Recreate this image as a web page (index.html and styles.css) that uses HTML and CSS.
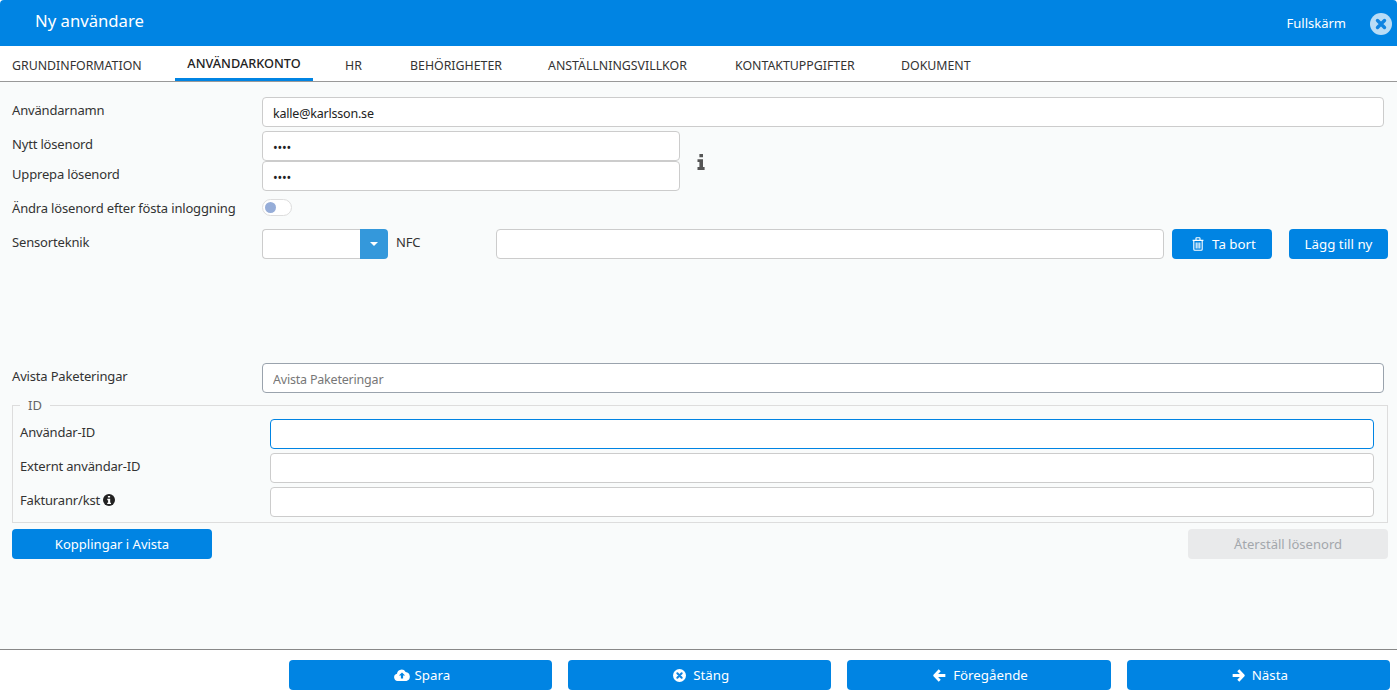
FILE: index.html
```html
<!DOCTYPE html>
<html lang="sv">
<head>
  <meta charset="UTF-8">
  <title>Ny användare</title>
  <link rel="stylesheet" href="styles.css">
</head>
<body>
  <div class="window">
    <div class="titlebar">
      <span class="title">Ny användare</span>
      <span class="fullscreen">Fullskärm</span>
      <svg class="close-icon" viewBox="0 0 22 22">
        <circle cx="11" cy="11" r="11" fill="#b9dcf6"/>
        <path d="M7.5 7.5l7 7M14.5 7.5l-7 7" stroke="#0f84e2" stroke-width="3.4" stroke-linecap="round"/>
      </svg>
    </div>

    <div class="tabs">
      <div class="tab tab1">GRUNDINFORMATION</div>
      <div class="tab tab2 active">ANVÄNDARKONTO</div>
      <div class="tab tab3">HR</div>
      <div class="tab tab4">BEHÖRIGHETER</div>
      <div class="tab tab5">ANSTÄLLNINGSVILLKOR</div>
      <div class="tab tab6">KONTAKTUPPGIFTER</div>
      <div class="tab tab7">DOKUMENT</div>
    </div>

    <div class="form">
      <div class="row">
        <label class="label">Användarnamn</label>
        <input class="input grow" type="text" value="kalle@karlsson.se">
      </div>

      <div class="password-group">
        <div class="password-rows">
          <div class="row no-gap">
            <label class="label">Nytt lösenord</label>
            <input class="input pw" type="password" value="1234">
          </div>
          <div class="row no-gap">
            <label class="label">Upprepa lösenord</label>
            <input class="input pw" type="password" value="1234">
          </div>
        </div>
        <svg class="pw-info" viewBox="0 0 8 16">
          <path d="M2.4 0h3.6v3.2H2.4zM.5 5.2H6v7.9h1.6V16H.5v-2.9h1.9V8H.5z" fill="#555"/>
        </svg>
      </div>

      <div class="row toggle-row">
        <label class="label">Ändra lösenord efter fösta inloggning</label>
        <div class="toggle"><div class="knob"></div></div>
      </div>

      <div class="row sensor-row">
        <label class="label">Sensorteknik</label>
        <div class="select">
          <div class="select-value"></div>
          <div class="select-arrow"><div class="caret"></div></div>
        </div>
        <span class="nfc">NFC</span>
        <input class="input nfc-input" type="text">
        <button class="btn remove">
          <svg class="icon trash" viewBox="0 0 12 14">
            <path d="M.6 3.4h10.800M4 3.200V1.400c0-.4.2-.6.6-.6h2.800c.4 0 .6.2.6.6v1.800M1.800 3.600v8.600c0 .6.4 1 1 1h6.400c.6 0 1-.4 1-1V3.600M4.200 5.400v6M6 5.400v6M7.800 5.400v6" fill="none" stroke="#fff" stroke-width="1.100"/>
          </svg>
          Ta bort
        </button>
        <button class="btn add">Lägg till ny</button>
      </div>

      <div class="row avista-row">
        <label class="label">Avista Paketeringar</label>
        <input class="input grow required" type="text" placeholder="Avista Paketeringar">
      </div>

      <fieldset class="id-box">
        <legend>ID</legend>
        <div class="row">
          <label class="label id-label">Användar-ID</label>
          <input class="input grow focused" type="text">
        </div>
        <div class="row">
          <label class="label id-label">Externt användar-ID</label>
          <input class="input grow" type="text">
        </div>
        <div class="row">
          <label class="label id-label">Fakturanr/kst
            <svg class="small-info" viewBox="0 0 12 12">
              <circle cx="6" cy="6" r="6" fill="#222"/>
              <path d="M4.9 1.9h2.200v1.700H4.900zM4.300 4.800h2.900v3.900h.8v1.400H4.200V8.700h.9V6.200h-.8z" fill="#fff"/>
            </svg>
          </label>
          <input class="input grow" type="text">
        </div>
      </fieldset>

      <div class="actions">
        <button class="btn wide">Kopplingar i Avista</button>
        <button class="btn wide disabled">Återställ lösenord</button>
      </div>
    </div>

    <div class="footer">
      <button class="btn foot save">
        <svg class="icon cloud" viewBox="0 0 16 12">
          <path d="M4 12a3.700 3.700 0 0 1-1-7.300A4.600 4.600 0 0 1 11.600 3 4.600 4.600 0 0 1 12.500 12zM8 3.400L4.900 6.600h2v3h2.200v-3h2z" fill="#fff" fill-rule="evenodd"/>
        </svg>
        Spara
      </button>
      <button class="btn foot">
        <svg class="icon" viewBox="0 0 12 12">
          <circle cx="6" cy="6" r="6" fill="#fff"/>
          <path d="M4 4l4 4M8 4l-4 4" stroke="#0f84e2" stroke-width="1.900" stroke-linecap="round"/>
        </svg>
        Stäng
      </button>
      <button class="btn foot">
        <svg class="icon arrow" viewBox="0 0 12 12">
          <path d="M6.200 1.200L1.600 6l4.600 4.800M2 6h9.400" fill="none" stroke="#fff" stroke-width="2.600" stroke-linejoin="round"/>
        </svg>
        Föregående
      </button>
      <button class="btn foot">
        <svg class="icon arrow" viewBox="0 0 12 12">
          <path d="M5.800 1.200L10.400 6l-4.600 4.800M10 6H.6" fill="none" stroke="#fff" stroke-width="2.600" stroke-linejoin="round"/>
        </svg>
        Nästa
      </button>
    </div>
  </div>
</body>
</html>
```

FILE: styles.css
```css
* {
  box-sizing: border-box;
}
html, body {
  margin: 0;
  height: 100%;
}
body {
  font-family: "Noto Sans", "Open Sans", sans-serif;
  font-size: 13px;
  color: #333;
  background: #fff;
}
.window {
  height: 697px;
  display: flex;
  flex-direction: column;
}
.titlebar {
  height: 46px;
  flex: none;
  background: #0084e3;
  color: #fff;
  display: flex;
  align-items: center;
  border-radius: 4px 4px 0 0;
}
.title {
  font-size: 16.7px;
  margin-left: 35px;
  margin-top: -5px;
  flex: 1;
}
.fullscreen {
  font-size: 13px;
  margin-top: -1px;
}
.close-icon {
  width: 22px;
  height: 22px;
  margin: 2px 5px 0 24px;
}
.tabs {
  height: 36px;
  flex: none;
  background: #fff;
  border-bottom: 1px solid #999;
  display: flex;
}
.tab {
  font-size: 12.35px;
  color: #333;
  height: 35px;
  padding-top: 11px;
  white-space: nowrap;
}
.tab1 { margin-left: 12px; width: 163px; }
.tab2 {
  width: 138px;
  padding-top: 8px;
  text-align: center;
  font-size: 12.7px;
  color: #222;
  font-weight: 500;
  border-bottom: 3px solid #0084e3;
}
.tab3 { margin-left: 32px; width: 65px; }
.tab4 { width: 138px; }
.tab5 { width: 187px; }
.tab6 { width: 166px; }
.form {
  flex: 1;
  background: #f9fbfb;
  padding: 15px 9px 0 12px;
}
.row {
  display: flex;
  align-items: flex-start;
  margin-bottom: 4px;
}
.row.no-gap {
  margin-bottom: 0;
}
.label {
  width: 250px;
  flex: none;
  padding-top: 4px;
  line-height: 18px;
  color: #333;
  letter-spacing: -0.17px;
}
.input {
  height: 30px;
  padding: 2px 10px 0;
  border: 1px solid #ccc;
  border-radius: 4px;
  background: #fff;
  font-family: inherit;
  font-size: 12.5px;
  letter-spacing: -0.2px;
  color: #222;
  outline: none;
}
.input::placeholder {
  color: #777;
  font-size: 12.5px;
}
.grow {
  flex: 1;
  min-width: 0;
  margin-right: 4px;
}
.pw {
  width: 418px;
}
.focused {
  border-color: #0084e3;
}
.required {
  border-color: #9aa3ad;
}
.password-group {
  display: flex;
  align-items: center;
}
.pw-info {
  width: 8px;
  height: 16px;
  margin: 2px 0 0 17px;
}
.toggle-row {
  margin: 8px 0 0;
}
.toggle-row .label {
  padding-top: 0;
}
.toggle {
  width: 30px;
  height: 17px;
  border: 1px solid #ddd;
  border-radius: 9px;
  background: #fff;
  padding: 2px;
}
.knob {
  width: 11px;
  height: 11px;
  border-radius: 50%;
  background: #96add8;
}
.sensor-row {
  margin: 12px 0 0;
}
.select {
  width: 126px;
  height: 30px;
  display: flex;
}
.select-value {
  flex: 1;
  background: #fff;
  border: 1px solid #ccc;
  border-right: none;
  border-radius: 4px 0 0 4px;
}
.select-arrow {
  width: 28px;
  background: #3498db;
  border-radius: 0 4px 4px 0;
  display: flex;
  align-items: center;
  justify-content: center;
}
.caret {
  border-left: 4px solid transparent;
  border-right: 4px solid transparent;
  border-top: 4px solid #fff;
}
.nfc {
  width: 108px;
  padding: 4px 0 0 8px;
  line-height: 18px;
  letter-spacing: -0.17px;
}
.nfc-input {
  width: 668px;
}
.btn {
  height: 30px;
  border: none;
  border-radius: 4px;
  background: #0084e3;
  color: #fff;
  font-family: inherit;
  font-size: 13.3px;
  padding: 0;
  display: flex;
  align-items: center;
  justify-content: center;
  gap: 7px;
}
.icon {
  width: 13px;
  height: 13px;
}
.trash {
  width: 12px;
  height: 14px;
  margin-right: 1px;
}
.arrow {
  width: 13px;
  height: 13px;
}
.cloud {
  width: 16px;
  height: 12px;
}
.remove {
  width: 100px;
  margin-left: 8px;
  padding-left: 4px;
}
.add {
  width: 99px;
  margin-left: 17px;
}
.avista-row {
  margin: 104px 0 0;
}
.id-box {
  margin: 7px 0 0;
  padding: 0 9px 0 7px;
  height: 123px;
  border: 1px solid #ddd;
  min-width: 0;
}
.id-box legend {
  margin-left: 0;
  padding: 0 8px;
  font-size: 13px;
  line-height: 10px;
  color: #666;
}
.id-box .row:first-of-type {
  margin-top: 9px;
}
.small-info {
  width: 12px;
  height: 12px;
  vertical-align: -1px;
}
.actions {
  display: flex;
  justify-content: space-between;
  margin-top: 6px;
}
.wide {
  width: 200px;
  font-size: 13.05px;
}
.disabled {
  background: #e9eaeb;
  color: #a3a7ac;
}
.footer {
  height: 48px;
  flex: none;
  background: #fff;
  border-top: 1px solid #888;
  padding: 10px 7px 0 288.7px;
  display: flex;
  gap: 16px;
}
.foot {
  flex: 1;
  font-size: 13.3px;
  padding-left: 3px;
}
.save {
  gap: 5px;
}
```
